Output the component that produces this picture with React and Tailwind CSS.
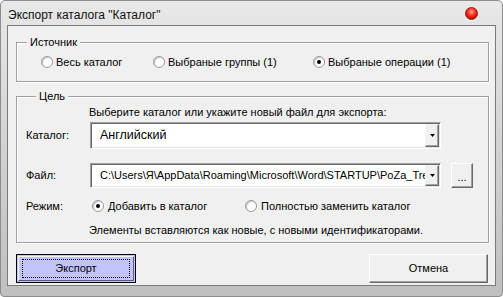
import React, { useState } from "react";

const font = { fontFamily: '"Liberation Sans", Arial, sans-serif' };

function Radio({ checked }) {
  return (
    <span className="relative flex h-[12px] w-[12px] shrink-0 items-center justify-center rounded-full border border-[#9a9a9a] bg-[radial-gradient(circle_at_60%_60%,#ffffff_45%,#e2e2e2)] shadow-[inset_1px_1px_0_#c8c8c8]">
      {checked && <span className="h-[4px] w-[4px] rounded-full bg-black" />}
    </span>
  );
}

function RadioItem({ checked, label, onClick, className = "" }) {
  return (
    <div onClick={onClick} className={"flex items-center gap-[3px] cursor-default " + className}>
      <Radio checked={checked} />
      <span className="leading-[14px]">{label}</span>
    </div>
  );
}

function ArrowButton() {
  return (
    <div className="flex h-full w-[14px] shrink-0 items-center justify-center border border-t-[#f5f5f5] border-l-[#f5f5f5] border-r-[#696969] border-b-[#696969] bg-[#f0f0f0] shadow-[inset_-1px_-1px_0_#a0a0a0]">
      <svg width="5" height="3" viewBox="0 0 5 3">
        <path d="M0 0h5L2.5 3z" fill="#000" />
      </svg>
    </div>
  );
}

function Combo({ value, className = "", textClass = "" }) {
  return (
    <div
      className={
        "flex w-[351px] items-stretch border border-t-[#a0a0a0] border-l-[#a0a0a0] border-r-white border-b-white bg-white p-[1px] shadow-[inset_1px_1px_0_#696969,inset_-1px_-1px_0_#e3e3e3] " +
        className
      }
    >
      <div className={"flex flex-1 items-center overflow-hidden whitespace-nowrap pl-[8px] " + textClass}>
        {value}
      </div>
      <ArrowButton />
    </div>
  );
}

function Group({ title, children, className = "" }) {
  return (
    <fieldset
      className={
        "border border-[#a0a0a0] shadow-[inset_1px_1px_0_#fff,1px_1px_0_#fff] " + className
      }
    >
      <legend className="ml-[10px] bg-[#f0f0f0] px-[3px] leading-[13px]">{title}</legend>
      {children}
    </fieldset>
  );
}

export default function App() {
  const [source, setSource] = useState(2);
  const [mode, setMode] = useState(0);

  return (
    <div
      style={font}
      className="relative h-[297px] w-[503px] overflow-hidden rounded-t-[5px] rounded-b-[4px] border border-[#8c8c8c] bg-gradient-to-b from-[#e8e8e8] via-[#d2d2d2] to-[#bfbfbf] text-[11px] text-black"
    >
      {/* title bar */}
      <div className="flex h-[24px] items-center justify-between pl-[7px] pr-[24px]">
        <span className="pt-[3px] text-[12px] leading-[14px] text-[#111]">
          Экспорт каталога "Каталог"
        </span>
        <span className="h-[13px] w-[13px] rounded-full border border-[#8a1a10] bg-[radial-gradient(circle_at_50%_35%,#ffb0a0_0%,#ff3b2a_35%,#d40c00_70%,#8e0600)] shadow-[0_1px_1px_rgba(255,255,255,0.8)]" />
      </div>

      {/* client area */}
      <div className="ml-[6px] flex h-[261px] w-[489px] flex-col border border-[#7a7a7a] bg-[#f0f0f0] pl-[8px] pr-[6px]">
        <Group title="Источник" className="mt-[10px] pb-[12px]">
          <div className="mt-[6px] flex h-[14px] items-center pl-[24px]">
            <RadioItem
              className="w-[112px]"
              checked={source === 0}
              onClick={() => setSource(0)}
              label="Весь каталог"
            />
            <RadioItem
              className="w-[160px]"
              checked={source === 1}
              onClick={() => setSource(1)}
              label="Выбраные группы (1)"
            />
            <RadioItem
              checked={source === 2}
              onClick={() => setSource(2)}
              label="Выбраные операции (1)"
            />
          </div>
        </Group>

        <Group title="Цель" className="mt-[8px] pb-[5px] pl-[9px]">
          <div className="mt-[3px] h-[13px] pl-[63px] leading-[13px]">
            Выберите каталог или укажите новый файл для экспорта:
          </div>

          <div className="mt-[3px] flex items-center">
            <span className="w-[64px]">Каталог:</span>
            <Combo value="Английский" className="h-[27px]" textClass="text-[12.5px]" />
          </div>

          <div className="mt-[14px] flex items-center">
            <span className="w-[64px]">Файл:</span>
            <Combo
              value="C:\Users\Я\AppData\Roaming\Microsoft\Word\STARTUP\PoZa_Tree"
              className="h-[25px]"
            />
            <button className="ml-[10px] flex h-[25px] w-[22px] items-center justify-center border border-t-white border-l-white border-r-[#696969] border-b-[#696969] bg-[#f0f0f0] pt-[4px] leading-[11px] shadow-[inset_-1px_-1px_0_#a0a0a0]">
              ...
            </button>
          </div>

          <div className="mt-[11px] flex h-[14px] items-center">
            <span className="w-[66px]">Режим:</span>
            <RadioItem
              className="w-[153px] gap-[4px]"
              checked={mode === 0}
              onClick={() => setMode(0)}
              label="Добавить в каталог"
            />
            <RadioItem
              className="gap-[4px]"
              checked={mode === 1}
              onClick={() => setMode(1)}
              label="Полностью заменить каталог"
            />
          </div>

          <div className="mt-[10px] h-[14px] pl-[63px] leading-[14px]">
            Элементы вставляются как новые, с новыми идентификаторами.
          </div>
        </Group>

        <div className="mt-[11px] flex justify-between pr-[1px]">
          <button className="h-[29px] w-[120px] border border-black bg-[#c4c4fc] p-[1px]">
            <div className="flex h-full w-full items-center justify-center border border-t-[#f4f4ff] border-l-[#f4f4ff] border-r-[#5a5a80] border-b-[#5a5a80]">
              <div className="flex h-[19px] w-[108px] items-center justify-center border border-dotted border-black">
                Экспорт
              </div>
            </div>
          </button>
          <button className="flex h-[29px] w-[119px] items-center justify-center border border-t-white border-l-white border-r-[#696969] border-b-[#696969] bg-[#f0f0f0] shadow-[inset_-1px_-1px_0_#a0a0a0]">
            Отмена
          </button>
        </div>
      </div>
    </div>
  );
}
